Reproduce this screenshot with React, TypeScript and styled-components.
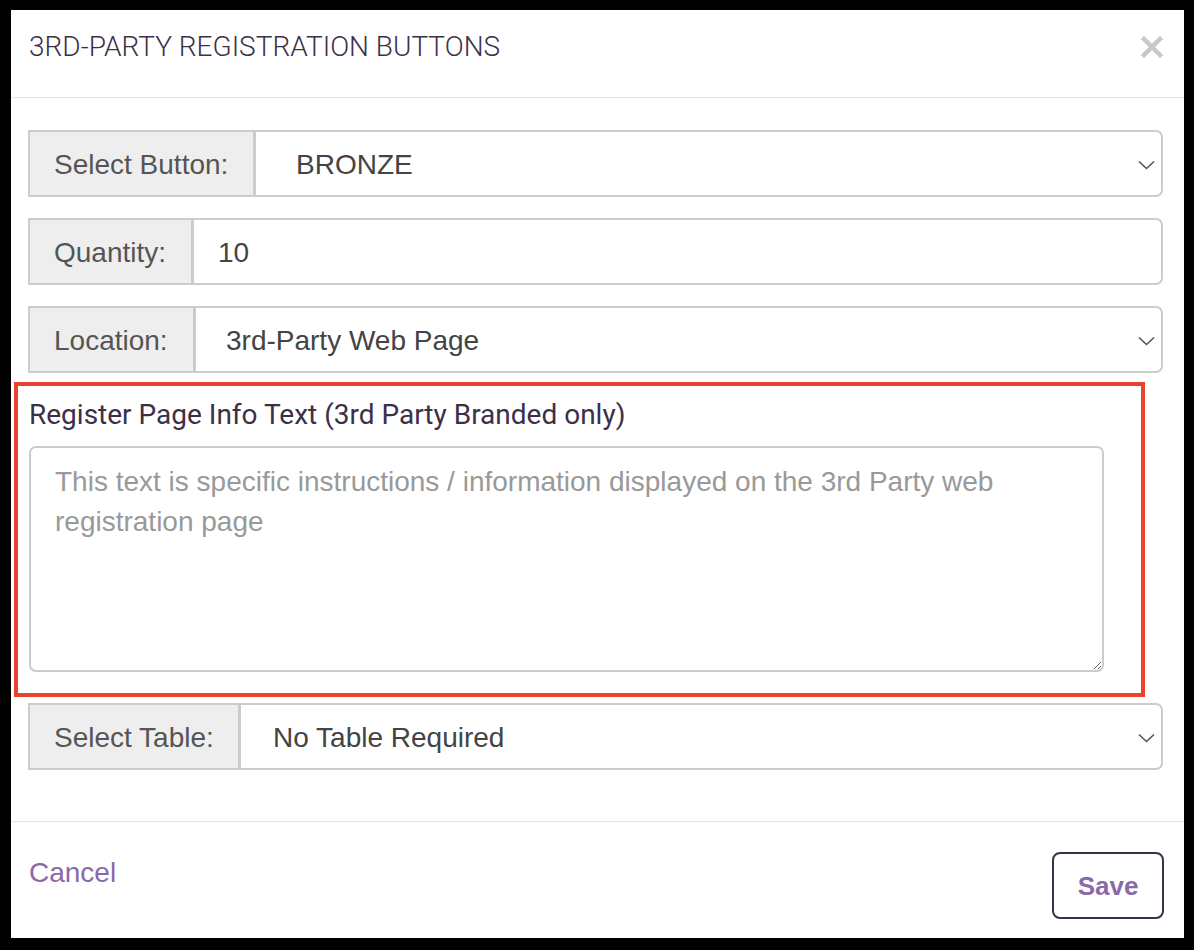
import React from 'react'
import styled, { createGlobalStyle } from 'styled-components'

const GlobalStyle = createGlobalStyle`
  html, body {
    margin: 0;
    padding: 0;
    background: #000;
  }
  * {
    box-sizing: border-box;
  }
`

const Frame = styled.div`
  width: 1194px;
  height: 950px;
  padding: 10px 10px 12px 11px;
  background: #000;
`

const Modal = styled.div`
  background: #fff;
  height: 100%;
  display: flex;
  flex-direction: column;
`

const Header = styled.div`
  height: 88px;
  border-bottom: 1px solid #e5e5e5;
  display: flex;
  align-items: center;
  justify-content: space-between;
  padding: 0 21px 14px 18px;
`

const Title = styled.h4`
  margin: 0;
  font-family: Roboto, 'Liberation Sans', sans-serif;
  font-weight: 300;
  font-size: 28px;
  line-height: 34px;
  color: #3c3048;
`

const Close = styled.button`
  border: 0;
  background: none;
  padding: 0;
  cursor: pointer;
  display: flex;
`

const Body = styled.div`
  padding: 32px 21px 51px 17px;
  display: flex;
  flex-direction: column;
  border-bottom: 1px solid #e5e5e5;
`

const Group = styled.div<{ $mt?: number }>`
  display: flex;
  height: 67px;
  margin-top: ${(p) => p.$mt ?? 0}px;
`

const Addon = styled.div<{ $w: number }>`
  width: ${(p) => p.$w}px;
  flex: none;
  background: #eee;
  border: 2px solid #ccc;
  border-right-width: 3px;
  display: flex;
  align-items: center;
  padding: 2px 0 0 24px;
  font-family: 'Liberation Sans', Arial, sans-serif;
  font-size: 28px;
  color: #555;
`

const Field = styled.div`
  position: relative;
  flex: 1;
  display: flex;
`

const Select = styled.select<{ $pl: number }>`
  appearance: none;
  flex: 1;
  border: 2px solid #ccc;
  border-left: 0;
  border-radius: 0 7px 7px 0;
  background: #fff;
  padding: 2px 50px 0 ${(p) => p.$pl}px;
  font-family: 'Liberation Sans', Arial, sans-serif;
  font-size: 28px;
  color: #444;
  outline: none;
`

const Input = styled.input`
  flex: 1;
  border: 2px solid #ccc;
  border-left: 0;
  border-radius: 0 7px 7px 0;
  background: #fff;
  padding: 2px 0 0 24px;
  font-family: 'Liberation Sans', Arial, sans-serif;
  font-size: 28px;
  color: #444;
  outline: none;
`

const Chevron = styled.svg`
  position: absolute;
  right: 8px;
  top: 50%;
  margin-top: -4px;
  pointer-events: none;
`

const Highlight = styled.div`
  margin: 9px 0 0 -14px;
  width: 1131px;
  border: 4px solid #e8432c;
  padding: 12px 37px 21px 11px;
`

const InfoLabel = styled.label`
  display: block;
  font-family: Roboto, 'Liberation Sans', sans-serif;
  font-size: 28px;
  color: #3c3048;
  margin-bottom: 14px;
  line-height: 34px;
`

const TextArea = styled.textarea`
  display: block;
  width: 100%;
  height: 226px;
  border: 2px solid #ccc;
  border-radius: 7px;
  padding: 14px 24px;
  font-family: 'Liberation Sans', Arial, sans-serif;
  font-size: 28px;
  line-height: 40px;
  color: #444;
  resize: vertical;
  outline: none;
  &::placeholder {
    color: #999;
  }
`

const Footer = styled.div`
  flex: 1;
  display: flex;
  align-items: flex-start;
  justify-content: space-between;
  padding: 30px 20px 0 18px;
`

const CancelLink = styled.a`
  font-family: 'Liberation Sans', Arial, sans-serif;
  font-size: 28px;
  color: #8a6aa6;
  text-decoration: none;
  margin-top: 5px;
`

const SaveButton = styled.button`
  width: 112px;
  height: 67px;
  border: 2px solid #3c3048;
  border-radius: 8px;
  background: #fff;
  padding-top: 2px;
  font-family: 'Liberation Sans', Arial, sans-serif;
  font-weight: bold;
  font-size: 26px;
  color: #8a6aa6;
  cursor: pointer;
`

const ChevronIcon = () => (
  <Chevron width="17" height="10" viewBox="0 0 17 10">
    <path d="M1 1.5 L8.5 8.5 L16 1.5" fill="none" stroke="#555" strokeWidth="1.6" />
  </Chevron>
)

const CloseIcon = () => (
  <svg width="22" height="22" viewBox="0 0 22 22">
    <path d="M3 3 L19 19 M19 3 L3 19" stroke="#c8c8c8" strokeWidth="4.5" strokeLinecap="square" />
  </svg>
)

const App = () => {
  return (
    <>
      <GlobalStyle />
      <Frame>
        <Modal>
          <Header>
            <Title>3RD-PARTY REGISTRATION BUTTONS</Title>
            <Close aria-label="Close">
              <CloseIcon />
            </Close>
          </Header>
          <Body>
            <Group>
              <Addon $w={228}>Select Button:</Addon>
              <Field>
                <Select $pl={40} defaultValue="BRONZE">
                  <option>BRONZE</option>
                  <option>SILVER</option>
                  <option>GOLD</option>
                </Select>
                <ChevronIcon />
              </Field>
            </Group>
            <Group $mt={21}>
              <Addon $w={166}>Quantity:</Addon>
              <Field>
                <Input defaultValue="10" />
              </Field>
            </Group>
            <Group $mt={21}>
              <Addon $w={168}>Location:</Addon>
              <Field>
                <Select $pl={30} defaultValue="3rd-Party Web Page">
                  <option>3rd-Party Web Page</option>
                  <option>Event Page</option>
                </Select>
                <ChevronIcon />
              </Field>
            </Group>
            <Highlight>
              <InfoLabel>Register Page Info Text (3rd Party Branded only)</InfoLabel>
              <TextArea placeholder="This text is specific instructions / information displayed on the 3rd Party web registration page" />
            </Highlight>
            <Group $mt={6}>
              <Addon $w={213}>Select Table:</Addon>
              <Field>
                <Select $pl={32} defaultValue="No Table Required">
                  <option>No Table Required</option>
                  <option>Table 1</option>
                </Select>
                <ChevronIcon />
              </Field>
            </Group>
          </Body>
          <Footer>
            <CancelLink href="#">Cancel</CancelLink>
            <SaveButton>Save</SaveButton>
          </Footer>
        </Modal>
      </Frame>
    </>
  )
}

export default App
